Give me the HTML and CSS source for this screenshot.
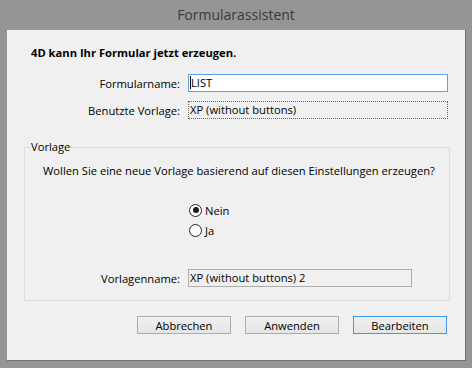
FILE: index.html
```html
<!DOCTYPE html>
<html lang="de">
<head>
    <meta charset="UTF-8">
    <meta name="viewport" content="width=device-width, initial-scale=1.0">
    <title>Formularassistent</title>
    <link rel="stylesheet" href="styles.css">
</head>
<body>
    <div class="window">
        <div class="titlebar">Formularassistent</div>

        <div class="client">
            <h1 class="heading">4D kann Ihr Formular jetzt erzeugen.</h1>

            <div class="row row-name">
                <label class="label" for="formname">Formularname:</label>
                <div class="field field-edit" id="formname"><span class="caret"></span>LIST</div>
            </div>
            <div class="row row-used">
                <span class="label">Benutzte Vorlage:</span>
                <div class="field field-dotted">XP (without buttons)</div>
            </div>

            <fieldset class="group">
                <legend class="legend">Vorlage</legend>
                <p class="question">Wollen Sie eine neue Vorlage basierend auf diesen Einstellungen erzeugen?</p>

                <div class="radios">
                    <div class="radio"><span class="dot checked"></span>Nein</div>
                    <div class="radio"><span class="dot"></span>Ja</div>
                </div>

                <div class="row row-tplname">
                    <span class="label">Vorlagenname:</span>
                    <div class="field field-disabled">XP (without buttons) 2</div>
                </div>
            </fieldset>

            <div class="buttons">
                <button class="btn">Abbrechen</button>
                <button class="btn">Anwenden</button>
                <button class="btn btn-default">Bearbeiten</button>
            </div>
        </div>
    </div>
</body>
</html>
```

FILE: styles.css
```css
body {
    margin: 0;
    background-color: #959595;
    font-family: 'Open Sans', 'Liberation Sans', sans-serif;
    font-size: 11.2px;
    color: #000;
}

.window {
    width: 472px;
    height: 368px;
}

.titlebar {
    height: 30px;
    line-height: 30px;
    text-align: center;
    font-size: 14px;
    color: #3a3a3a;
}

.client {
    margin-left: 7px;
    width: 459px;
    height: 331px;
    background-color: #f0f0f0;
    border-right: 1px solid #6e6e6e;
    border-bottom: 1px solid #6e6e6e;
    padding-top: 15px;
    box-sizing: border-box;
}

.heading {
    margin: 0 0 13px 24px;
    font-size: 11.2px;
    font-weight: bold;
    line-height: 16px;
}

.row {
    display: flex;
    align-items: center;
    gap: 8px;
}

.label {
    width: 173px;
    text-align: right;
}

.row-used {
    margin-top: 9px;
}

.field {
    width: 260px;
    height: 18px;
    line-height: 16px;
    box-sizing: border-box;
    padding-left: 1px;
    white-space: nowrap;
}

.field-edit {
    background-color: #fff;
    border: 1px solid #5aa3e6;
}

.caret {
    display: inline-block;
    width: 1px;
    height: 13px;
    background-color: #000;
    vertical-align: -2px;
}

.field-dotted {
    border: 1px dotted #666;
}

/* Gruppe "Vorlage" */
.group {
    margin: 20px 0 0 17px;
    width: 426px;
    padding: 0 0 13px 0;
    border: 1px solid #dcdcdc;
    box-sizing: border-box;
}

.legend {
    margin-left: 5px;
    padding: 0 1px;
    line-height: 16px;
}

.question {
    margin: 8px 0 0 18px;
    line-height: 16px;
}

.radios {
    margin: 23px 0 0 164px;
}

.radio {
    display: flex;
    align-items: center;
    height: 16px;
    margin-bottom: 4px;
}

.dot {
    width: 13px;
    height: 13px;
    box-sizing: border-box;
    border: 1px solid #222;
    border-radius: 50%;
    background-color: #fff;
    margin-right: 3px;
    position: relative;
}

.dot.checked::after {
    content: "";
    position: absolute;
    left: 2.5px;
    top: 2.5px;
    width: 6px;
    height: 6px;
    border-radius: 50%;
    background-color: #1a1a1a;
}

.row-tplname {
    margin-top: 31px;
}

.row-tplname .label {
    width: 155px;
}

.field-disabled {
    width: 224px;
    border: 1px solid #adadad;
}

.buttons {
    display: flex;
    gap: 14px;
    margin: 15px 0 0 130px;
}

.btn {
    width: 94px;
    height: 18px;
    padding: 0;
    font-family: inherit;
    font-size: 11.2px;
    color: #000;
    border: 1px solid #acacac;
    background: linear-gradient(#f0f0f0, #e5e5e5);
}

.btn-default {
    border-color: #3c9be8;
}
```
